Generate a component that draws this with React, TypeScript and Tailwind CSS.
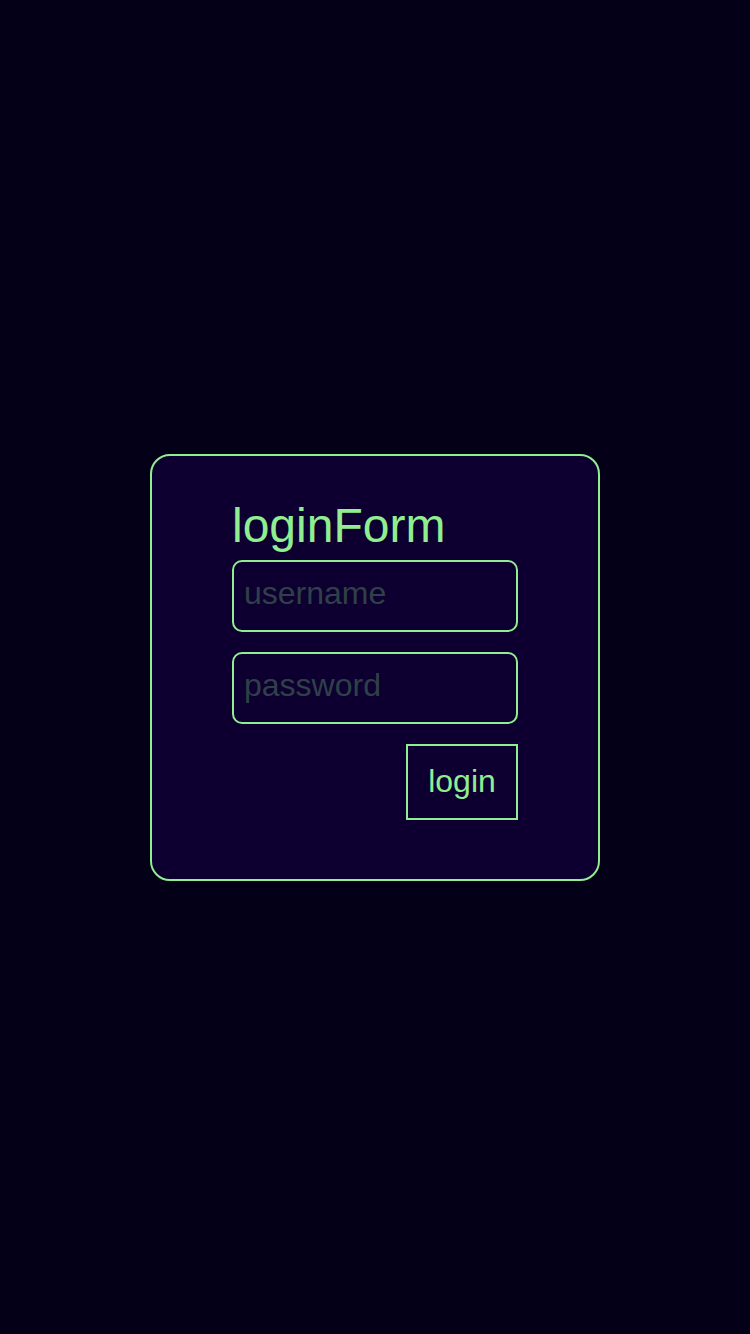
import React from "react";

export default function App() {
  return (
    <div
      className="w-[750px] h-[1334px] bg-[#030018] flex items-center justify-center"
      style={{ fontFamily: '"Liberation Sans", Arial, sans-serif' }}
    >
      <div className="mt-[1px] w-[450px] h-[427px] bg-[#0d0030] border-2 border-[#90ee90] rounded-[20px] flex flex-col pl-[80px] pt-[42px]">
        <h1 className="text-[48px] leading-[55px] text-[#90ee90] font-normal m-0 mb-[7px]">loginForm</h1>
        <input
          placeholder="username"
          className="w-[286px] h-[72px] bg-transparent border-2 border-[#90ee90] rounded-[10px] px-[10px] pb-[5px] text-[32px] text-[#90ee90] placeholder:text-[#2f4048] outline-none"
        />
        <input
          type="password"
          placeholder="password"
          className="mt-[20px] w-[286px] h-[72px] bg-transparent border-2 border-[#90ee90] rounded-[10px] px-[10px] pb-[5px] text-[32px] text-[#90ee90] placeholder:text-[#2f4048] outline-none"
        />
        <div className="w-[286px] flex justify-end mt-[20px]">
          <button className="w-[112px] h-[76px] border-2 border-[#90ee90] bg-transparent text-[32px] text-[#90ee90] flex items-center justify-center pb-[3px]">
            login
          </button>
        </div>
      </div>
    </div>
  );
}
